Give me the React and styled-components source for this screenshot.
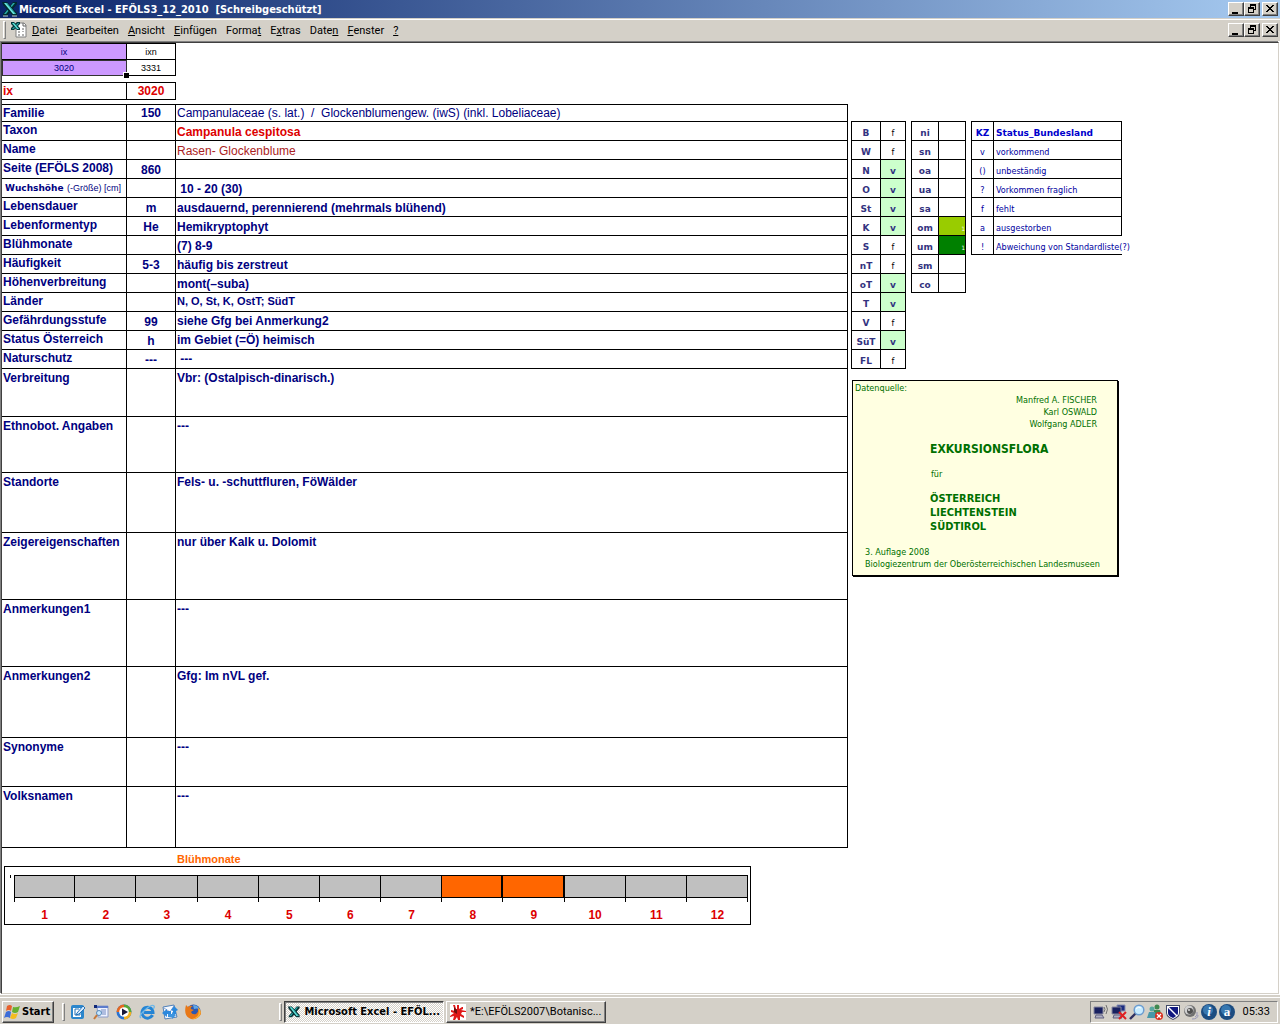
import React from 'react';
import styled, { createGlobalStyle } from 'styled-components';

// =======================
//   Data
// =======================

const menus = [
  ['', 'D', 'atei'],
  ['', 'B', 'earbeiten'],
  ['', 'A', 'nsicht'],
  ['', 'E', 'infügen'],
  ['Forma', 't', ''],
  ['E', 'x', 'tras'],
  ['Date', 'n', ''],
  ['', 'F', 'enster'],
  ['', '?', '']
];

const records = [
  { label: 'Familie', code: '150', value: 'Campanulaceae (s. lat.)  /  Glockenblumengew. (iwS) (inkl. Lobeliaceae)', height: 17, kind: 'plain' },
  { label: 'Taxon', value: 'Campanula cespitosa', kind: 'taxon' },
  { label: 'Name', value: 'Rasen- Glockenblume', kind: 'name' },
  { label: 'Seite (EFÖLS 2008)', code: '860' },
  { label: 'Wuchshöhe', hint: '(-Größe) [cm]', value: ' 10 - 20 (30)' },
  { label: 'Lebensdauer', code: 'm', value: 'ausdauernd, perennierend (mehrmals blühend)' },
  { label: 'Lebenformentyp', code: 'He', value: 'Hemikryptophyt' },
  { label: 'Blühmonate', value: '(7) 8-9' },
  { label: 'Häufigkeit', code: '5-3', value: 'häufig bis zerstreut' },
  { label: 'Höhenverbreitung', value: 'mont(–suba)' },
  { label: 'Länder', value: 'N, O, St, K, OstT; SüdT', kind: 'small', align: 'top' },
  { label: 'Gefährdungsstufe', code: '99', value: 'siehe Gfg bei Anmerkung2', align: 'middle' },
  { label: 'Status Österreich', code: 'h', value: 'im Gebiet (=Ö) heimisch', align: 'middle' },
  { label: 'Naturschutz', code: '---', value: ' ---', align: 'middle' },
  { label: 'Verbreitung', value: 'Vbr: (Ostalpisch-dinarisch.)', height: 48, align: 'top' },
  { label: 'Ethnobot. Angaben', value: '---', height: 56, align: 'top' },
  { label: 'Standorte', value: 'Fels- u. -schuttfluren, FöWälder', height: 60, align: 'top' },
  { label: 'Zeigereigenschaften', value: 'nur über Kalk u. Dolomit', height: 67, align: 'top' },
  { label: 'Anmerkungen1', value: '---', height: 67, align: 'top' },
  { label: 'Anmerkungen2', value: 'Gfg: Im nVL gef.', height: 71, align: 'top' },
  { label: 'Synonyme', value: '---', height: 49, align: 'top' },
  { label: 'Volksnamen', value: '---', height: 61, align: 'top' }
];

const regions = [
  ['B', 'f'], ['W', 'f'], ['N', 'v'], ['O', 'v'], ['St', 'v'], ['K', 'v'], ['S', 'f'],
  ['nT', 'f'], ['oT', 'v'], ['T', 'v'], ['V', 'f'], ['SüT', 'v'], ['FL', 'f']
];

const zones = [
  ['ni'], ['sn'], ['oa'], ['ua'], ['sa'], ['om', '#99cc00'], ['um', '#008000'], ['sm'], ['co']
];

const legend = [
  ['v', 'vorkommend'],
  ['()', 'unbeständig'],
  ['?', 'Vorkommen fraglich'],
  ['f', 'fehlt'],
  ['a', 'ausgestorben'],
  ['!', 'Abweichung von Standardliste(?)']
];

const months = [1, 2, 3, 4, 5, 6, 7, 8, 9, 10, 11, 12];
const blooming = [8, 9];

// =======================
//   Component Styles
// =======================

const ui = '"Roboto", "Liberation Sans", sans-serif';
const uiBold = '"DejaVu Sans Condensed", "DejaVu Sans", sans-serif';
const arial = '"Liberation Sans", Arial, sans-serif';

const GlobalStyle = createGlobalStyle`
  * { box-sizing: border-box; }
  body {
    margin: 0;
    background: #fff;
    font: 12px/16px ${arial};
    color: #000;
  }
  button { margin: 0; padding: 0; color: inherit; }
`;

const Page = styled.div`
  display: flex;
  flex-direction: column;
  min-height: 100vh;
`;

const TitleBar = styled.header`
  display: flex;
  align-items: center;
  height: 18px;
  padding: 0 2px;
  background: linear-gradient(90deg, #0a246a, #a6caf0);
  color: #fff;
`;

const Title = styled.h1`
  flex: 1;
  margin: 0 0 0 1px;
  padding-top: 1px;
  font: bold 11px/17px ${uiBold};
  white-space: pre;
`;

const MenuBar = styled.nav`
  display: flex;
  align-items: center;
  height: 23px;
  padding: 0 2px 0 3px;
  border-top: 1px solid #d4d0c8;
  background: #d4d0c8;
  box-shadow: inset 0 1px #fff;
`;

const Grip = styled.span`
  width: 3px;
  height: 18px;
  border: 1px solid;
  border-color: #fff #808080 #808080 #fff;
`;

const Menus = styled.div`
  display: flex;
  flex: 1;
  margin-left: 1px;
`;

const MenuButton = styled.button`
  padding: 2px 5px 0 4px;
  border: 0;
  background: none;
  font: 11px/18px ${ui};
`;

const MenuIcon = styled.span`
  display: flex;
  margin-left: 5px;
`;

const Controls = styled.div`
  display: flex;
`;

const ControlButton = styled.button`
  display: flex;
  width: 16px;
  height: 14px;
  margin-left: ${props => (props.$apart ? 2 : 0)}px;
  border: 1px solid;
  border-color: #fff #404040 #404040 #fff;
  background: #d4d0c8;
  box-shadow: inset -1px -1px #808080;
`;

const Sheet = styled.main`
  display: grid;
  flex: 1;
  grid-template-columns: minmax(0, 1fr) 427px;
  column-gap: 3px;
  align-items: start;
  border: 1px solid;
  border-color: #404040 #d4d0c8 #d4d0c8 #404040;
  box-shadow: -1px -1px #808080;
  margin: 1px 1px 0 1px;
`;

const GridTable = styled.table`
  width: ${props => props.$width || '100%'};
  margin-bottom: ${props => props.$below || 0}px;
  border-collapse: separate;
  border-spacing: 0;
  border-top: 1px solid #000;
  border-left: ${props => (props.$framed ? '1px solid #000' : '0')};
  table-layout: fixed;
`;

const Col = styled.col`
  width: ${props => props.$width}px;
`;

const Row = styled.tr`
  height: ${props => props.$height || 19}px;
`;

const Cell = styled.td`
  padding: ${props => (props.$roomy ? 1 : 0)}px 1px 0;
  border: solid #000;
  border-width: 0 1px 1px 0;
  vertical-align: ${props => props.$align || 'bottom'};
  white-space: pre;
`;

const KeyCell = styled(Cell)`
  height: 16px;
  padding: 0;
  background: ${props => (props.$selected ? '#cc99ff' : '#fff')};
  color: ${props => (props.$selected ? '#000080' : '#000')};
  font-size: 9px;
  line-height: 14px;
  text-align: center;
`;

const ActiveKeyCell = styled(KeyCell)`
  position: relative;
  outline: 1px solid #333;
  outline-offset: -1px;

  &::after {
    content: '';
    position: absolute;
    right: -3px;
    bottom: -3px;
    width: 5px;
    height: 5px;
    border: solid #fff;
    border-width: 1px 0 0 1px;
    background: #000;
  }
`;

const IndexCell = styled(Cell)`
  color: #dd0000;
  font-weight: bold;
  text-align: ${props => (props.$center ? 'center' : 'left')};
`;

const LabelCell = styled(Cell).attrs({ as: 'th', scope: 'row', $align: 'top' })`
  color: #000080;
  text-align: left;
`;

const SmallLabel = styled.span`
  padding-left: 2px;
  font: bold 9px/16px "DejaVu Sans", sans-serif;
`;

const Hint = styled.span`
  font: 9px/16px ${arial};
`;

const CodeCell = styled(Cell)`
  color: #000080;
  font-weight: bold;
  text-align: center;
`;

const ValueCell = styled(Cell)`
  color: ${props => ({ taxon: '#dd0000', name: '#aa2222' }[props.$kind] || '#000080')};
  font-size: ${props => (props.$kind === 'small' ? 11 : 12)}px;
  font-weight: ${props => (props.$kind === 'plain' || props.$kind === 'name' ? 'normal' : 'bold')};
`;

const ChartTitle = styled.h2`
  margin: 4px 0 0 175px;
  color: #ff6600;
  font-size: 11px;
  line-height: 14px;
`;

const Chart = styled.figure`
  display: flex;
  margin: 0 97px 0 2px;
  padding: 8px 2px 0 5px;
  height: 59px;
  border: 1px solid #000;
`;

const AxisMark = styled.span`
  width: 1px;
  height: 3px;
  margin-right: 3px;
  background: #000;
`;

const Months = styled.ol`
  display: grid;
  flex: 1;
  grid-template-columns: repeat(12, 1fr);
  margin: 0;
  padding: 0;
  list-style: none;
`;

const MonthBar = styled.div`
  height: 23px;
  border: solid #000;
  border-width: 1px ${props => (props.$on ? 2 : 1)}px 1px 0;
  background: ${props => (props.$on ? '#ff6600' : '#c0c0c0')};
`;

const Tick = styled.div`
  height: 4px;
  margin-bottom: 4px;
  border-right: 1px solid #000;
`;

const Month = styled.li`
  color: #dd0000;
  font-weight: bold;
  line-height: 18px;
  text-align: center;

  &:first-child > div {
    border-left: 1px solid #000;
  }
`;

const Side = styled.aside`
  padding-top: 78px;
`;

const SideTables = styled.div`
  display: flex;
  align-items: flex-start;
  gap: 5px;
`;

const SmallCell = styled(Cell)`
  padding: 0 ${props => (props.$left ? 2 : 0)}px;
  border-right-width: ${props => (props.$open ? 0 : 1)}px;
  background: ${props => props.$fill || 'transparent'};
  color: ${props => props.$color || '#0000a0'};
  font: ${props => (props.$bold ? 'bold 9px/13px "DejaVu Sans", sans-serif' : `9px/13px ${uiBold}`)};
  text-align: ${props => (props.$left ? 'left' : 'center')};
`;

const Mark = styled.span`
  display: block;
  color: #fff;
  font-size: 6px;
  text-align: right;
`;

const Source = styled.section`
  width: 266px;
  margin: 11px 0 0 1px;
  padding: 1px 12px 5px 2px;
  border: 1px solid #000;
  background: #ffffe1;
  box-shadow: 1px 1px #000;
  color: #007000;
  font: 9px/12px ${uiBold};
`;

const Authors = styled.p`
  margin: 0;
  padding-right: 8px;
  text-align: right;
`;

const SourceLine = styled.p`
  margin: 0;
  padding-left: ${props => props.$indent || 0}px;
  white-space: nowrap;
`;

const SourceHead = styled.h2`
  margin: 12px 0;
  padding-left: 75px;
  font: bold ${props => (props.$large ? 12 : 11)}px/14px ${uiBold};
`;

const TaskBar = styled.footer`
  display: flex;
  align-items: center;
  height: 29px;
  margin-top: 1px;
  padding: 4px 2px 0;
  background: #d4d0c8;
  box-shadow: inset 0 2px #d4d0c8, inset 0 3px #fff;
`;

const StartButton = styled.button`
  display: flex;
  align-items: center;
  gap: 2px;
  width: 52px;
  height: 22px;
  margin-right: 8px;
  padding-left: 1px;
  border: 1px solid;
  border-color: #fff #404040 #404040 #fff;
  background: #d4d0c8;
  box-shadow: inset -1px -1px #808080;
  font: bold 11px/18px ${uiBold};
`;

const QuickLaunch = styled.div`
  display: flex;
  flex: 0 0 209px;
  gap: 7px;
  margin-left: 5px;
`;

const IconButton = styled.button`
  display: flex;
  border: 0;
  background: none;
`;

const TaskButton = styled.button`
  display: flex;
  align-items: center;
  gap: 4px;
  width: 160px;
  height: 22px;
  margin-left: 2px;
  padding: 0 3px;
  border: 1px solid;
  border-color: ${props => (props.$active ? '#404040 #fff #fff #404040' : '#fff #404040 #404040 #fff')};
  background: ${props => (props.$active ? 'repeating-conic-gradient(#fff 0 25%, #d4d0c8 0 50%) 0 0 / 2px 2px' : '#d4d0c8')};
  box-shadow: ${props => (props.$active ? 'inset 1px 1px #808080' : 'inset -1px -1px #808080')};
  font: ${props => (props.$active ? `bold 11px/18px ${uiBold}` : `11px/18px ${ui}`)};
  white-space: nowrap;
`;

const Tray = styled.div`
  display: flex;
  align-items: center;
  gap: 2px;
  height: 22px;
  margin-left: auto;
  padding: 0 7px 0 2px;
  border: 1px solid;
  border-color: #808080 #fff #fff #808080;
`;

const Clock = styled.time`
  margin-left: 6px;
  font: 11px/18px ${ui};
`;

// =======================
//   Icons
// =======================

const Icon = ({ size = 16, children }) => (
  <svg width={size} height={size} viewBox='0 0 16 16' aria-hidden='true'>{children}</svg>
);

const ExcelIcon = () => (
  <Icon>
    <path d='M15 1h-4L1 13v2h4L15 3z' fill='#002c30' />
    <path d='M13 2h-2L2 13h2z' fill='#2aa8a8' />
    <path d='M0 1h5l10 11v3h-4L1 4z' fill='#002c30' />
    <path d='M2 2h3l9 11h-3z' fill='#6ae8e0' />
    <path d='M4 2h1l9 11h-1z' fill='#1c9090' />
    <path d='M1 15h5M10 15h5' stroke='#e8f4f4' strokeWidth='.8' />
  </Icon>
);

const WorkbookIcon = () => (
  <Icon>
    <path d='M5 1h8l2 2v12H5z' fill='#fff' stroke='#808080' />
    <path d='M12 1v3h3' fill='none' stroke='#606060' />
    <path d='M7 9h2v2H7zM11 9h2v1h-2zM7 12h2v2H7zM11 6h2v2h-2zM11 12h2v2h-2z' fill='#b0b0b0' />
    <path d='M9 0H6L0 6v2h3l6-6z' fill='#003438' />
    <path d='M0 0h3l6 6v2H6L0 2z' fill='#003438' />
    <path d='M1 1h2l5 6H6z' fill='#58e0d8' />
    <path d='M8 1H7L5 3l1 1zM3 5L1 7h1l2-1z' fill='#30b0b0' />
  </Icon>
);

const MinIcon = () => (
  <svg width='14' height='12' aria-hidden='true'><path d='M3 9h6v2H3z' /></svg>
);

const RestoreIcon = () => (
  <svg width='14' height='12' aria-hidden='true'>
    <path d='M5 1h6v2H5zM10 3h1v4h-1zM5 3h1v1H5zM9 6h1v1H9zM3 4h6v2H3zM3 6h1v4H3zM8 6h1v4H8zM4 9h4v1H4z' />
  </svg>
);

const CloseIcon = () => (
  <svg width='14' height='12' aria-hidden='true'>
    <path d='M3 2h2v1h1v1h2V3h1V2h2v1h-1v1H9v1H8v1h1v1h1v1h1v1H9V8H8V7H6v1H5v1H3V8h1V7h1V6h1V5H5V4H4V3H3z' />
  </svg>
);

const WindowsIcon = () => (
  <Icon>
    <path d='M3 2q3-2 5 0L7 7Q5 5 2 7z' fill='#e8602c' />
    <path d='M9 3q3 1 7-1l-2 6q-3 2-6 0z' fill='#66b030' />
    <path d='M2 8q3-2 5 0l-1 6q-3-2-6 0z' fill='#3c6cd8' />
    <path d='M8 9q3 2 6 0l-2 5q-3 2-6 0z' fill='#f4bc20' />
  </Icon>
);

const DesktopIcon = () => (
  <Icon>
    <rect x='1' y='1' width='13' height='14' rx='2' fill='#2b86cc' />
    <path d='M3 4h8v9H3z' fill='#fff' />
    <path d='M9 5H5v6h5V9' stroke='#2472b8' fill='none' />
    <path d='M7 9l6-7 2 2-6 6-3 1z' stroke='#2472b8' fill='#d8ecff' />
  </Icon>
);

const SearchPageIcon = () => (
  <Icon>
    <path d='M4 2h11v11H5z' fill='#eef2ff' stroke='#8c9cc8' />
    <path d='M4 2h11v2H4z' fill='#5c7ccc' />
    <path d='M8 6h5M8 8h5M9 10h4' stroke='#7088c0' />
    <path d='M1 1h3v3H1z' fill='#102878' />
    <circle cx='6' cy='9' r='2.5' fill='#c8e8ff' stroke='#5888b8' />
    <path d='M4 11l-3 4' stroke='#c87838' strokeWidth='2' />
  </Icon>
);

const PlayerIcon = () => (
  <Icon>
    <circle cx='8' cy='8' r='7.5' fill='#2c74d0' />
    <path d='M8 8V.5A7.5 7.5 0 0 1 15.500 8z' fill='#58a838' />
    <path d='M8 8H.5A7.500 7.500 0 0 1 8 .5z' fill='#e86820' />
    <path d='M8 8h7.500A7.500 7.500 0 0 1 8 15.500z' fill='#f0b020' />
    <circle cx='8' cy='8' r='4.800' fill='#fff' />
    <path d='M6 4.500l6 3.500-6 3.500z' fill='#181838' />
  </Icon>
);

const ExplorerIcon = () => (
  <Icon>
    <path d='M13.500 11A5.500 5.500 0 1 1 14 8.500H5' fill='none' stroke='#2484d4' strokeWidth='3' />
    <path d='M2 14Q-1 12 6 6q7-6 9-4 1 1-1 3' fill='none' stroke='#70b8e8' strokeWidth='1.300' />
  </Icon>
);

const MailIcon = () => (
  <Icon>
    <path d='M1 3l11-2 3 12-12 2z' fill='#f4f8ff' stroke='#5080b8' />
    <path d='M2 4l6 4 4-6' fill='none' stroke='#90a8d0' />
    <path d='M0 9l5-4v2h4v3H5v3zM12 2l4 4-2 1v3h-3V7L9 6z' fill='#2c88dc' />
    <path d='M14 11l-4 4v-2H6v-3h4V8z' fill='#3c94e0' />
  </Icon>
);

const FirefoxIcon = () => (
  <Icon>
    <circle cx='8.500' cy='7.500' r='7' fill='#2c58b0' />
    <path d='M8 1q5 0 6 4-2-1-5 0z' fill='#60a8e8' />
    <path d='M1 1l2 2q2-2 5-1-3 1-2 3l3 1q-2 1-3 2 1 3 5 2 3-2 2-6 3 2 3 6-3 6-10 5Q-2 12 1 1z' fill='#e87818' />
    <path d='M13 3q4 4 2 8-3 5-8 4 9-2 6-12z' fill='#f8b030' />
  </Icon>
);

const SplatIcon = () => (
  <Icon>
    <path d='M0 0h16v16H0z' fill='#fff' />
    <path d='M3 1h2l1 4h1V1h2v4l3-2h1v2l-2 1 5 1v1h-4l-1 2 3 2v2l-4-2v4H8l-1-3-2 3H3l1-4-4 1v-1l4-3-3-1V6l4 1z' fill='#e01818' />
    <path d='M4 3l3 3v4l-3-2z' fill='#701010' />
  </Icon>
);

const Computer = () => (
  <>
    <path d='M1 3h9v7H1z' fill='#182060' stroke='#8888a0' />
    <path d='M3 11h6l2 3H2z' fill='#b0b0c4' stroke='#606080' />
  </>
);

const WirelessIcon = () => (
  <Icon>
    <Computer />
    <path d='M11 3q2 2 0 5M13 1q3 4 0 9' fill='none' stroke='#707070' />
  </Icon>
);

const OfflineIcon = () => (
  <Icon>
    <path d='M6 1h8v6H6z' fill='#1c2c80' stroke='#8890b0' />
    <Computer />
    <path d='M8 8l7 7M15 8l-7 7' stroke='#e02020' strokeWidth='2' />
  </Icon>
);

const LensIcon = () => (
  <Icon>
    <path d='M7 9l-6 6' stroke='#303060' strokeWidth='2.400' />
    <circle cx='10' cy='6' r='4.800' fill='#c8ecff' stroke='#6c9cd0' strokeWidth='1.500' />
    <path d='M7 5q2-3 5-1' stroke='#fff' fill='none' />
  </Icon>
);

const PeopleIcon = () => (
  <Icon>
    <circle cx='10' cy='3' r='2.500' fill='#408850' />
    <path d='M7 6h6l2 7H6z' fill='#408850' />
    <circle cx='5' cy='5' r='2.500' fill='#58a8a0' />
    <path d='M2 8h6l2 6H0z' fill='#4898a8' />
    <circle cx='12' cy='12' r='4' fill='#d83020' />
    <path d='M10 10l4 4M14 10l-4 4' stroke='#fff' strokeWidth='1.300' />
  </Icon>
);

const ShieldIcon = () => (
  <Icon>
    <path d='M1 1h14v8q0 4-7 7-7-3-7-7z' fill='#404868' />
    <path d='M2 2h12v7q0 3-6 6-6-3-6-6z' fill='#fff' />
    <path d='M4 3h9v6q0 2-1 2zM3 4l8 8q-1 1-3 2-5-2-5-5z' fill='#101880' />
  </Icon>
);

const SpeakerIcon = () => (
  <Icon>
    <circle cx='7' cy='7' r='6' fill='#707070' />
    <circle cx='6' cy='6' r='4.500' fill='#d0d0d0' />
    <circle cx='7' cy='7' r='3' fill='#505050' />
    <circle cx='6' cy='6' r='1' fill='#ddd' />
    <path d='M12 13q3-1 2-5M9 15q6 0 6-4' fill='none' stroke='#9898b8' />
  </Icon>
);

const BallLetter = styled.text`
  fill: #fff;
  font: ${props => props.$slant} bold 13px "Liberation Serif", serif;
  text-anchor: middle;
`;

const BallIcon = ({ letter, slant }) => (
  <Icon>
    <circle cx='8' cy='8' r='8' fill='#1c4c80' />
    <circle cx='7' cy='6' r='5' fill='#3878b0' />
    <BallLetter x='8' y='12' $slant={slant}>{letter}</BallLetter>
  </Icon>
);

// =======================
//     Components
// =======================

const WindowControls = ({ name }) => (
  <Controls>
    <ControlButton aria-label={`${name} minimieren`}><MinIcon /></ControlButton>
    <ControlButton aria-label={`${name} wiederherstellen`}><RestoreIcon /></ControlButton>
    <ControlButton $apart aria-label={`${name} schließen`}><CloseIcon /></ControlButton>
  </Controls>
);

const KeyTables = () => (
  <>
    <GridTable $width='174px' $below={6}>
      <colgroup><Col $width={125} /><Col $width={49} /></colgroup>
      <tbody>
        <tr><KeyCell $selected>ix</KeyCell><KeyCell>ixn</KeyCell></tr>
        <tr><ActiveKeyCell $selected>3020</ActiveKeyCell><KeyCell>3331</KeyCell></tr>
      </tbody>
    </GridTable>
    <GridTable $width='174px' $below={4}>
      <colgroup><Col $width={125} /><Col $width={49} /></colgroup>
      <tbody>
        <Row $height={17}><IndexCell>ix</IndexCell><IndexCell $center>3020</IndexCell></Row>
      </tbody>
    </GridTable>
  </>
);

const RecordTable = () => (
  <GridTable>
    <colgroup><Col $width={125} /><Col $width={49} /><col /></colgroup>
    <tbody>
      {records.map(item => {
        const roomy = item.height > 19;
        return (
          <Row key={item.label} $height={item.height}>
            <LabelCell $roomy={roomy}>
              {item.hint ? <><SmallLabel>{item.label}</SmallLabel> <Hint>{item.hint}</Hint></> : item.label}
            </LabelCell>
            <CodeCell>{item.code}</CodeCell>
            <ValueCell $roomy={roomy} $kind={item.kind} $align={item.align}>{item.value}</ValueCell>
          </Row>
        );
      })}
    </tbody>
  </GridTable>
);

const BloomChart = () => (
  <>
    <ChartTitle>Blühmonate</ChartTitle>
    <Chart>
      <AxisMark />
      <Months>
        {months.map(month =>
          <Month key={month}>
            <MonthBar $on={blooming.includes(month)} />
            <Tick />
            {month}
          </Month>
        )}
      </Months>
    </Chart>
  </>
);

const RegionTable = () => (
  <GridTable $framed $width='55px'>
    <colgroup><Col $width={29} /><Col $width={25} /></colgroup>
    <tbody>
      {regions.map(([name, status]) =>
        <Row key={name}>
          <SmallCell $bold $color='#333380'>{name}</SmallCell>
          {status === 'v'
            ? <SmallCell $bold $color='#333380' $fill='#ccffcc'>v</SmallCell>
            : <SmallCell $color='#000'>f</SmallCell>}
        </Row>
      )}
    </tbody>
  </GridTable>
);

const ZoneTable = () => (
  <GridTable $framed $width='55px'>
    <colgroup><Col $width={27} /><Col $width={27} /></colgroup>
    <tbody>
      {zones.map(([name, fill]) =>
        <Row key={name}>
          <SmallCell $bold $color='#333380'>{name}</SmallCell>
          <SmallCell $fill={fill}>{fill && <Mark>1</Mark>}</SmallCell>
        </Row>
      )}
    </tbody>
  </GridTable>
);

const LegendTable = () => (
  <GridTable $framed $width='151px'>
    <colgroup><Col $width={22} /><Col $width={128} /></colgroup>
    <tbody>
      <Row>
        <SmallCell as='th' $bold $color='#0000cc'>KZ</SmallCell>
        <SmallCell as='th' $bold $left $color='#0000cc'>Status_Bundesland</SmallCell>
      </Row>
      {legend.map(([sign, text]) =>
        <Row key={sign}>
          <SmallCell>{sign}</SmallCell>
          <SmallCell $left $open={sign === '!'}>{text}</SmallCell>
        </Row>
      )}
    </tbody>
  </GridTable>
);

const SourceNote = () => (
  <Source>
    <SourceLine>Datenquelle:</SourceLine>
    <Authors>Manfred A. FISCHER<br />Karl OSWALD<br />Wolfgang ADLER</Authors>
    <SourceHead $large>EXKURSIONSFLORA</SourceHead>
    <SourceLine $indent={76}>für</SourceLine>
    <SourceHead>ÖSTERREICH<br />LIECHTENSTEIN<br />SÜDTIROL</SourceHead>
    <SourceLine $indent={10}>3. Auflage 2008</SourceLine>
    <SourceLine $indent={10}>Biologiezentrum der Oberösterreichischen Landesmuseen</SourceLine>
  </Source>
);

const App = () => {
  return (
    <Page>
      <GlobalStyle />
      <TitleBar>
        <ExcelIcon />
        <Title>Microsoft Excel - EFÖLS3_12_2010  [Schreibgeschützt]</Title>
        <WindowControls name='Excel' />
      </TitleBar>
      <MenuBar>
        <Grip />
        <MenuIcon><WorkbookIcon /></MenuIcon>
        <Menus>
          {menus.map(([before, key, after]) =>
            <MenuButton key={before + key + after}>{before}<u>{key}</u>{after}</MenuButton>
          )}
        </Menus>
        <WindowControls name='Mappe' />
      </MenuBar>

      <Sheet>
        <div>
          <KeyTables />
          <RecordTable />
          <BloomChart />
        </div>
        <Side>
          <SideTables>
            <RegionTable />
            <ZoneTable />
            <LegendTable />
          </SideTables>
          <SourceNote />
        </Side>
      </Sheet>

      <TaskBar>
        <StartButton><WindowsIcon />Start</StartButton>
        <Grip />
        <QuickLaunch>
          <IconButton aria-label='Desktop'><DesktopIcon /></IconButton>
          <IconButton aria-label='Suche'><SearchPageIcon /></IconButton>
          <IconButton aria-label='Media Player'><PlayerIcon /></IconButton>
          <IconButton aria-label='Internet Explorer'><ExplorerIcon /></IconButton>
          <IconButton aria-label='Outlook Express'><MailIcon /></IconButton>
          <IconButton aria-label='Firefox'><FirefoxIcon /></IconButton>
        </QuickLaunch>
        <Grip />
        <TaskButton $active><ExcelIcon />Microsoft Excel - EFÖL...</TaskButton>
        <TaskButton><SplatIcon />*E:\EFÖLS2007\Botanisc...</TaskButton>
        <Tray>
          <WirelessIcon />
          <OfflineIcon />
          <LensIcon />
          <PeopleIcon />
          <ShieldIcon />
          <SpeakerIcon />
          <BallIcon letter='i' slant='italic' />
          <BallIcon letter='a' slant='normal' />
          <Clock>05:33</Clock>
        </Tray>
      </TaskBar>
    </Page>
  );
};

export default App;
